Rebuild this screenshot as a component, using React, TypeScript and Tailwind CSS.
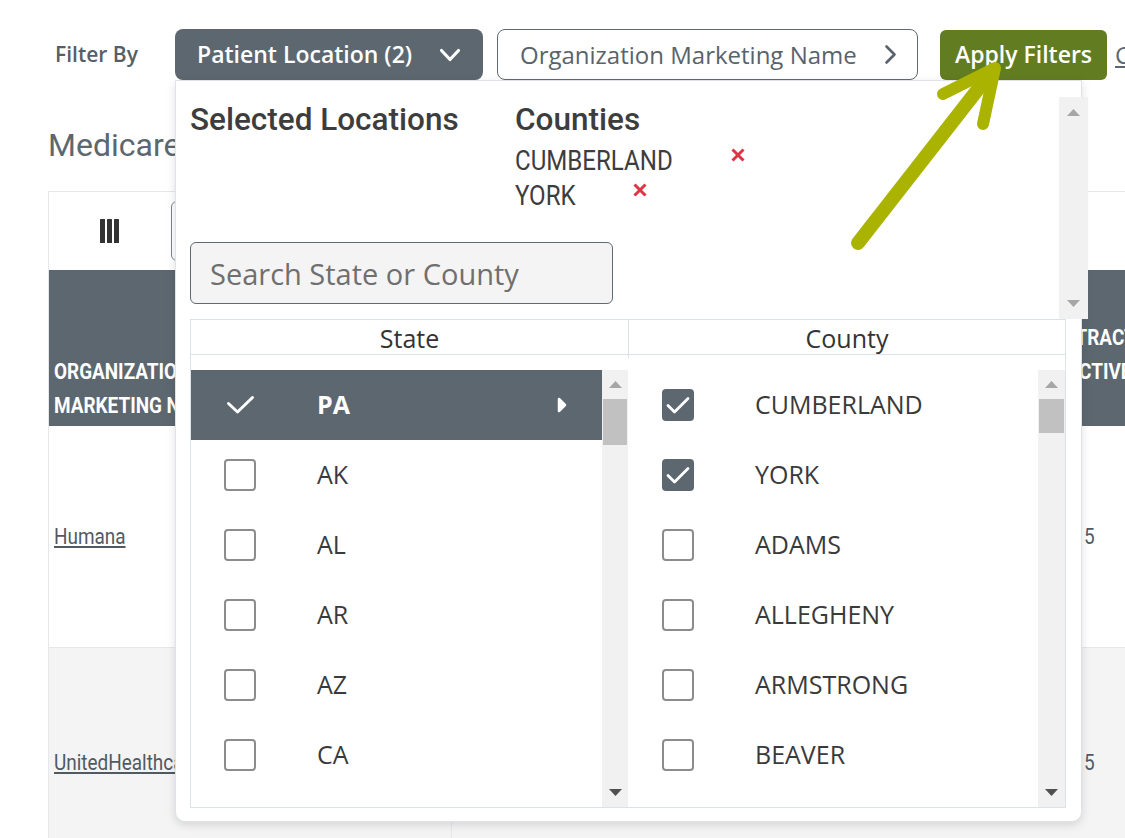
import React from 'react';

type StateRow = { code: string; active?: boolean };
type CountyRow = { name: string; checked?: boolean };

const stateRows: StateRow[] = [
  { code: 'PA', active: true },
  { code: 'AK' },
  { code: 'AL' },
  { code: 'AR' },
  { code: 'AZ' },
  { code: 'CA' },
];

const countyRows: CountyRow[] = [
  { name: 'CUMBERLAND', checked: true },
  { name: 'YORK', checked: true },
  { name: 'ADAMS' },
  { name: 'ALLEGHENY' },
  { name: 'ARMSTRONG' },
  { name: 'BEAVER' },
];

const selectedCounties = [
  { name: 'CUMBERLAND', width: 'w-[159px]' },
  { name: 'YORK', width: 'w-[61px]' },
];

const ArrowUp = ({ color }: { color: string }) => (
  <svg width="13" height="7" viewBox="0 0 13 7">
    <path d="M6.5 0 13 7H0Z" fill={color} />
  </svg>
);

const ArrowDown = ({ color }: { color: string }) => (
  <svg width="13" height="7" viewBox="0 0 13 7">
    <path d="M0 0h13L6.5 7Z" fill={color} />
  </svg>
);

const Scrollbar = ({ width, thumb }: { width: string; thumb?: string }) => (
  <div className={`flex shrink-0 flex-col bg-[#f1f1f1] ${width}`}>
    <div className="flex h-[29px] items-center justify-center">
      <ArrowUp color="#a6a6a6" />
    </div>
    {thumb && <div className={`mx-[1px] bg-[#c1c1c1] ${thumb}`} />}
    <div className="flex-1" />
    <div className="flex h-[30px] items-center justify-center">
      <ArrowDown color="#505050" />
    </div>
  </div>
);

const Checkbox = ({ checked }: { checked?: boolean }) =>
  checked ? (
    <span className="flex h-[32px] w-[32px] shrink-0 items-center justify-center rounded-[4px] bg-[#5c6770]">
      <svg width="32" height="32" viewBox="0 0 32 32" fill="none" stroke="white" strokeWidth="2.8" strokeLinecap="round" strokeLinejoin="round">
        <path d="M6 16.5l6.5 6.5L26 9.5" />
      </svg>
    </span>
  ) : (
    <span className="block h-[32px] w-[32px] shrink-0 rounded-[4px] border-[2.5px] border-[#8c8c8c]" />
  );

const LocationPanel = () => (
  <div className="absolute left-0 top-[51px] z-10 h-[742px] w-[907px] rounded-b-[10px] border border-[#dfe3e8] bg-white pl-[14px] pr-[15px] pt-[16px] shadow-[0_3px_10px_rgba(0,0,0,0.13)]">
    {/* selected summary + search */}
    <div className="-mr-[22px] flex h-[222px]">
      <div className="flex-1 pt-[4px]">
        <div className="flex">
          <h3 className="w-[325px] shrink-0 whitespace-nowrap font-['Roboto',sans-serif] text-[31.5px] font-medium leading-[38px] text-[#3d3d3d]">
            Selected Locations
          </h3>
          <div>
            <h3 className="font-['Roboto',sans-serif] text-[31.5px] font-medium leading-[38px] text-[#3d3d3d]">Counties</h3>
            <ul className="mt-[4px]">
              {selectedCounties.map((c) => (
                <li key={c.name} className="flex h-[35px] items-start">
                  <span className={`${c.width} shrink-0 font-['Roboto',sans-serif] text-[28px] leading-[35px] text-[#3d3d3d]`}>
                    <span className="inline-block origin-left scale-x-[0.86] whitespace-nowrap">{c.name}</span>
                  </span>
                  <svg className="ml-[57px] mt-[5px] shrink-0" width="14" height="14" viewBox="0 0 14 14" stroke="#dc3545" strokeWidth="3">
                    <path d="M1.5 1.5l11 11M12.5 1.5l-11 11" />
                  </svg>
                </li>
              ))}
            </ul>
          </div>
        </div>
        <input
          readOnly
          placeholder="Search State or County"
          className="mt-[29px] h-[62px] w-[423px] rounded-[6px] border border-[#5f6a73] bg-[#f4f4f4] pl-[19px] text-[29px] text-[#333] outline-none placeholder:text-[#6f6f6f]"
        />
      </div>
      <div className="flex w-[29px] shrink-0 flex-col bg-[#f1f1f1]">
        <div className="flex h-[30px] items-center justify-center">
          <ArrowUp color="#a6a6a6" />
        </div>
        <div className="flex-1" />
        <div className="flex h-[32px] items-center justify-center">
          <ArrowDown color="#a6a6a6" />
        </div>
      </div>
    </div>

    {/* column headers */}
    <div className="grid h-[36px] grid-cols-2 border border-[#dde2e7] text-[25px] font-medium text-[#333]">
      <div className="flex items-center justify-center">State</div>
      <div className="flex items-center justify-center border-l border-[#dde2e7]">County</div>
    </div>

    {/* lists */}
    <div className="grid grid-cols-2 border-x border-b border-[#dde2e7] pt-[15px]">
      <div className="flex h-[437px]">
        <div className="flex-1 overflow-hidden">
          {stateRows.map((s) =>
            s.active ? (
              <div key={s.code} className="flex h-[70px] items-center bg-[#5c6770] pl-[33px] pr-[35px] text-white">
                <svg width="32" height="32" viewBox="0 0 32 32" fill="none" stroke="white" strokeWidth="3" strokeLinecap="round" strokeLinejoin="round">
                  <path d="M4.5 14.5l9 8.5 15-14.5" />
                </svg>
                <span className="ml-[61px] flex-1 text-[25px] font-bold">{s.code}</span>
                <svg width="10" height="16" viewBox="0 0 10 16">
                  <path d="M2 2l6 6-6 6Z" fill="white" stroke="white" strokeWidth="2.5" strokeLinejoin="round" />
                </svg>
              </div>
            ) : (
              <div key={s.code} className="flex h-[70px] items-center pl-[33px]">
                <Checkbox />
                <span className="ml-[61px] text-[25px] text-[#3a3a3a]">{s.code}</span>
              </div>
            )
          )}
        </div>
        <Scrollbar width="w-[26px]" thumb="h-[46px]" />
      </div>
      <div className="flex h-[437px]">
        <div className="flex-1 overflow-hidden">
          {countyRows.map((c) => (
            <div key={c.name} className="flex h-[70px] items-center pl-[34px]">
              <Checkbox checked={c.checked} />
              <span className="ml-[61px] text-[25px] text-[#3a3a3a]">{c.name}</span>
            </div>
          ))}
        </div>
        <Scrollbar width="w-[27px]" thumb="h-[34px]" />
      </div>
    </div>
  </div>
);

const Condensed = ({ children, className = '' }: { children: React.ReactNode; className?: string }) => (
  <span className={`inline-block origin-left scale-x-[0.86] whitespace-nowrap ${className}`}>{children}</span>
);

export default function App() {
  return (
    <div className="relative h-[838px] w-[1125px] overflow-hidden bg-white font-['Open_Sans','Liberation_Sans',sans-serif]">
      {/* filter bar */}
      <div className="flex w-[1300px] items-center pl-[55px] pt-[29px]">
        <span className="w-[120px] shrink-0 text-[21px] font-semibold text-[#555f69]">Filter By</span>
        <div className="relative shrink-0">
          <button className="flex h-[51px] w-[308px] items-center justify-between rounded-[8px] bg-[#5c6770] pl-[22px] pr-[22px] text-white">
            <span className="whitespace-nowrap text-[23px] font-semibold">Patient Location (2)</span>
            <svg width="22" height="14" viewBox="0 0 22 14" fill="none" stroke="currentColor" strokeWidth="3.2" strokeLinecap="round" strokeLinejoin="round">
              <path d="M2.5 2.5 11 11.5 19.5 2.5" />
            </svg>
          </button>
          <LocationPanel />
        </div>
        <button className="ml-[14px] flex h-[51px] w-[421px] shrink-0 items-center justify-between rounded-[8px] border border-[#5f6a73] bg-white pl-[22px] pr-[20px] text-[#59636c]">
          <span className="whitespace-nowrap text-[24px]">Organization Marketing Name</span>
          <svg width="13" height="21" viewBox="0 0 13 21" fill="none" stroke="currentColor" strokeWidth="2.6" strokeLinecap="round" strokeLinejoin="round">
            <path d="M2.5 2.5l8 8-8 8" />
          </svg>
        </button>
        <button className="ml-[22px] flex h-[50px] w-[167px] shrink-0 items-center justify-center whitespace-nowrap rounded-[6px] bg-[#627c22] text-[23px] font-semibold text-white">
          Apply Filters
        </button>
        <span className="ml-[8px] shrink-0 whitespace-nowrap text-[24px] text-[#5c6770] underline">Clear</span>
      </div>

      <h2 className="ml-[48px] mt-[46px] whitespace-nowrap font-['Roboto',sans-serif] text-[32px] leading-[38px] text-[#5c6770]">
        Medicare Advantage Plans
      </h2>

      {/* results table */}
      <div className="ml-[48px] mt-[27px] w-[1200px] border-l border-t border-[#e5e7eb] font-['Roboto',sans-serif]">
        <div className="flex h-[78px] items-center">
          <svg className="ml-[51px] shrink-0" width="19" height="24" viewBox="0 0 19 24" fill="#333">
            <rect x="0" y="0" width="5" height="24" rx="0.5" />
            <rect x="7" y="0" width="5" height="24" rx="0.5" />
            <rect x="14" y="0" width="5" height="24" rx="0.5" />
          </svg>
          <div className="ml-[52px] h-[60px] w-[400px] shrink-0 rounded-[6px] border border-[#7b858d]" />
        </div>
        <div className="flex h-[156px] bg-[#5c6770] text-[22px] font-bold leading-[34px] text-white">
          <div className="flex w-[403px] shrink-0 flex-col justify-end pb-[3px] pl-[5px]">
            <Condensed>ORGANIZATION</Condensed>
            <Condensed>MARKETING NAME</Condensed>
          </div>
          <div className="w-[628px] shrink-0" />
          <div className="flex flex-1 flex-col justify-end pb-[37px]">
            <div className="-ml-[43px] flex flex-col">
              <Condensed>CONTRACT</Condensed>
              <Condensed>EFFECTIVE</Condensed>
            </div>
          </div>
        </div>
        <div className="flex h-[222px] border-b border-[#e5e7eb] text-[22px] text-[#4f5a63]">
          <div className="flex w-[403px] shrink-0 items-center border-r border-[#e5e7eb] pl-[5px]">
            <Condensed className="underline">Humana</Condensed>
          </div>
          <div className="w-[628px] shrink-0" />
          <div className="flex flex-1 items-center pl-[4px]"><Condensed>5</Condensed></div>
        </div>
        <div className="flex h-[228px] bg-[#f4f4f4] text-[22px] text-[#4f5a63]">
          <div className="flex w-[403px] shrink-0 items-center border-r border-[#e5e7eb] pl-[5px]">
            <Condensed className="underline">UnitedHealthcare</Condensed>
          </div>
          <div className="w-[628px] shrink-0" />
          <div className="flex flex-1 items-center pl-[4px]"><Condensed>5</Condensed></div>
        </div>
      </div>

      {/* annotation arrow */}
      <svg className="pointer-events-none absolute inset-0 z-20" width="1125" height="838" viewBox="0 0 1125 838" fill="none" stroke="#a9b300" strokeLinecap="round" strokeLinejoin="round">
        <path d="M858 243 993 70" strokeWidth="14" />
        <path d="M943 94 995 68 983 124" strokeWidth="12" />
      </svg>
    </div>
  );
}
